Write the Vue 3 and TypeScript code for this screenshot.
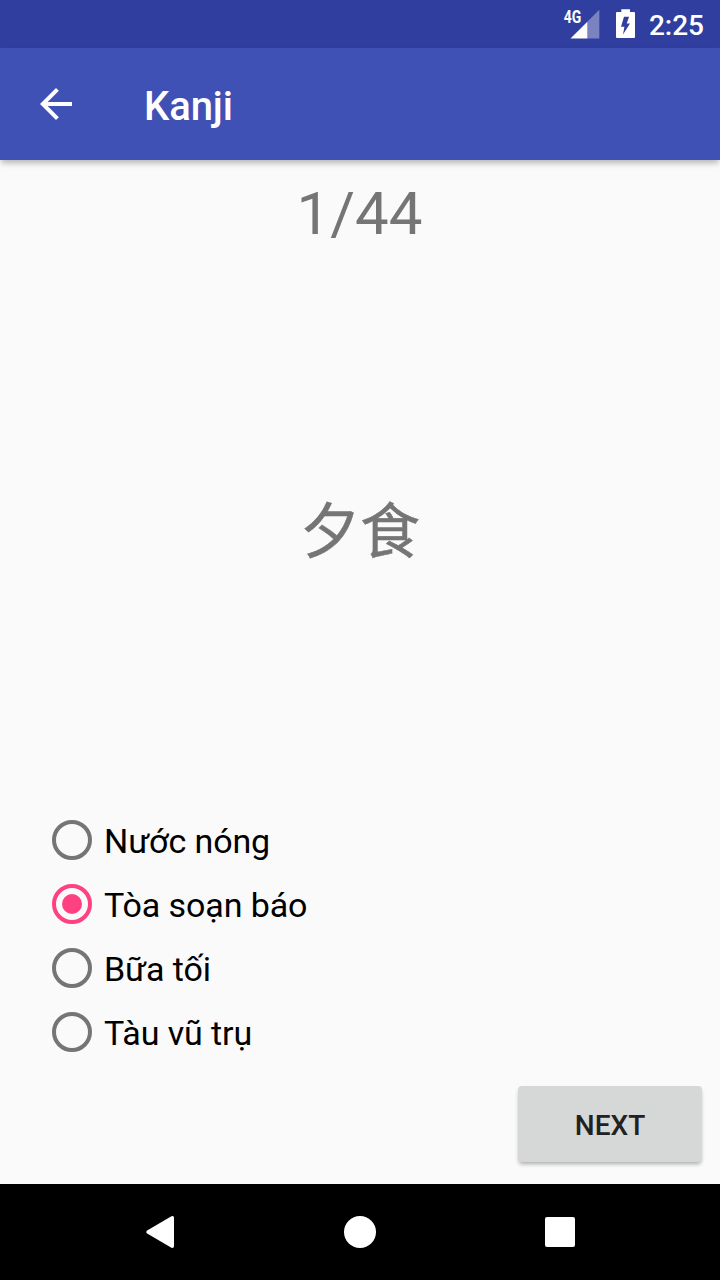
<script setup lang="ts">
import { ref } from 'vue'

const options: string[] = ['Nước nóng', 'Tòa soạn báo', 'Bữa tối', 'Tàu vũ trụ']
const selected = ref<number>(1)
const total = 44
const current = ref<number>(1)

function next(): void {
  if (current.value < total) current.value += 1
}
</script>

<template>
  <div class="screen">
    <header class="status-bar">
      <svg class="signal" width="40" height="32" viewBox="0 0 40 32">
        <path d="M10.5 30.5 27.6 13.4V30.5Z" fill="#fff" />
        <path d="M27.6 13.4 39.3 1.7V30.5H27.6Z" fill="#7a82c0" />
        <text x="3.8" y="15" class="network" textLength="17.5" lengthAdjust="spacingAndGlyphs">4G</text>
      </svg>
      <svg class="battery" width="19" height="29" viewBox="0 0 19 29">
        <path
          fill="#fff"
          fill-rule="evenodd"
          d="M5.3 0.3H14V3H18Q19 3 19 4V28Q19 29 18 29H1Q0 29 0 28V4Q0 3 1 3H5.3ZM8 7.7 5 17.8H8.4L7 25.4 14 14.4H10.7L13.1 7.7Z"
        />
      </svg>
      <span class="clock">2:25</span>
    </header>

    <div class="toolbar">
      <svg class="back" width="48" height="48" viewBox="0 0 24 24" fill="#fff">
        <path d="M20 11H7.83l5.59-5.59L12 4l-8 8 8 8 1.41-1.41L7.83 13H20v-2z" />
      </svg>
      <h1 class="title">Kanji</h1>
    </div>

    <main class="content">
      <div class="counter">{{ current }}/{{ total }}</div>
      <div class="question" lang="zh-CN">夕食</div>
      <div class="options" role="radiogroup">
        <div
          v-for="(option, i) in options"
          :key="option"
          class="option"
          role="radio"
          :aria-checked="selected === i"
          @click="selected = i"
        >
          <span class="radio" :class="{ checked: selected === i }"></span>
          <span class="label">{{ option }}</span>
        </div>
      </div>
      <button class="next" type="button" @click="next">NEXT</button>
    </main>

    <nav class="nav-bar">
      <svg width="32" height="36" viewBox="0 0 32 36">
        <path d="M4 18 28.3 3.7V32.3Z" fill="#fff" stroke="#fff" stroke-width="3.4" stroke-linejoin="round" />
      </svg>
      <svg width="32" height="32" viewBox="0 0 32 32"><circle cx="16" cy="16" r="16" fill="#fff" /></svg>
      <svg width="32" height="32" viewBox="0 0 32 32"><rect x="1" y="1" width="30" height="30" rx="2" fill="#fff" /></svg>
    </nav>
  </div>
</template>

<style>
body {
  margin: 0;
  background: #fafafa;
}
</style>

<style scoped>
.screen {
  width: 720px;
  height: 1280px;
  display: flex;
  flex-direction: column;
  overflow: hidden;
  background: #fafafa;
  font-family: Roboto, "Noto Sans CJK SC", sans-serif;
}
.status-bar {
  height: 48px;
  flex: none;
  box-sizing: border-box;
  display: flex;
  justify-content: flex-end;
  align-items: flex-start;
  padding-right: 16px;
  background: #303f9f;
  color: #fff;
}
.signal {
  margin: 8px 16px 0 0;
}
.network {
  font: 700 17.5px Roboto, sans-serif;
  fill: #fff;
}
.battery {
  margin: 9px 14px 0 0;
}
.clock {
  font-size: 28px;
  font-weight: 500;
  line-height: 34px;
  margin-top: 9px;
}
.toolbar {
  height: 112px;
  flex: none;
  box-sizing: border-box;
  display: flex;
  align-items: center;
  padding-left: 32px;
  background: #3f51b5;
  box-shadow: 0 4px 6px -1px rgba(0, 0, 0, 0.28);
}
.title {
  margin: 6px 0 0 64px;
  color: #fff;
  font-size: 40px;
  font-weight: 500;
  line-height: 48px;
  letter-spacing: -0.1px;
}
.content {
  flex: 1;
  display: flex;
  flex-direction: column;
}
.counter {
  margin-top: 16px;
  height: 76px;
  text-align: center;
  color: #757575;
  font-size: 60px;
  line-height: 76px;
  padding-right: 1px;
}
.question {
  flex: 1;
  display: flex;
  align-items: center;
  justify-content: center;
  box-sizing: border-box;
  padding-bottom: 6px;
  color: #757575;
  font-family: "Noto Sans CJK SC", sans-serif;
  font-size: 60px;
  line-height: 80px;
  -webkit-text-stroke: 0.5px #757575;
}
.options {
  margin-left: 52px;
}
.option {
  display: flex;
  align-items: center;
  height: 64px;
}
.radio {
  box-sizing: border-box;
  width: 40px;
  height: 40px;
  border: 4px solid #757575;
  border-radius: 50%;
  display: flex;
  align-items: center;
  justify-content: center;
}
.radio.checked {
  border-color: #ff4081;
}
.radio.checked::after {
  content: "";
  width: 20px;
  height: 20px;
  border-radius: 50%;
  background: #ff4081;
}
.label {
  margin: 2px 0 0 12px;
  font-size: 34px;
  line-height: 40px;
  letter-spacing: -0.1px;
  color: #000;
}
.next {
  align-self: flex-end;
  margin: 22px 18px 22px 0;
  width: 184px;
  height: 76px;
  padding: 2px 0 0;
  border: 0;
  border-radius: 4px;
  background: #d6d7d7;
  color: #212121;
  font: 500 28px Roboto, sans-serif;
  box-shadow: 0 3px 4px -1px rgba(0, 0, 0, 0.32);
}
.nav-bar {
  height: 96px;
  flex: none;
  box-sizing: border-box;
  display: flex;
  align-items: center;
  justify-content: space-between;
  padding: 0 144px;
  background: #000;
}
</style>
